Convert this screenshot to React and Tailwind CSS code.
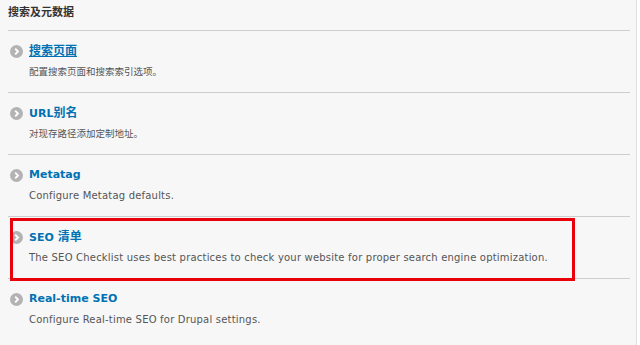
import React from "react";

const items = [
  { title: <span className="text-[12px]">搜索页面</span>, desc: "配置搜索页面和搜索索引选项。", cjk: true, underline: true },
  { title: <>URL<span className="text-[12px]">别名</span></>, desc: "对现存路径添加定制地址。", cjk: true },
  { title: "Metatag", desc: "Configure Metatag defaults." },
  { title: <>SEO <span className="text-[12px]">清单</span></>, desc: "The SEO Checklist uses best practices to check your website for proper search engine optimization." },
  { title: "Real-time SEO", desc: "Configure Real-time SEO for Drupal settings.", last: true },
];

function Icon() {
  return (
    <svg width="13" height="13" viewBox="0 0 13 13" className="shrink-0">
      <circle cx="6.5" cy="6.5" r="6.5" fill="#b3b3b3" />
      <path d="M5.2 3.6 L8 6.5 L5.2 9.4" stroke="#fff" strokeWidth="1.9" fill="none" />
    </svg>
  );
}

export default function App() {
  return (
    <div className="relative w-[640px] h-[345px] bg-white overflow-hidden" style={{ fontFamily: '"DejaVu Sans", "Noto Sans CJK SC", sans-serif' }}>
      <div className="w-[637px] h-[345px] bg-[#f7f7f7] border-r border-[#dedede] pl-[8px]">
        <div className="w-[622px]">
          <div className="h-[31px] border-b border-[#cdcdcd] pt-[5px] text-[11px] leading-[16px] font-bold text-[#333]">
            搜索及元数据
          </div>
          {items.map((it, i) => (
            <div key={i} className={`h-[62px] pt-[12px] ${it.last ? "" : "border-b border-[#cdcdcd]"}`}>
              <div className="flex items-center h-[16px]">
                <div className="w-[21px] pl-[2px] flex items-center pt-[1px]">
                  <Icon />
                </div>
                <a className={`text-[11px] leading-[16px] font-bold text-[#0071b3] ${it.underline ? "underline" : ""}`}>{it.title}</a>
              </div>
              <div className={`mt-[6px] pl-[21px] leading-[14px] text-[#555] ${it.cjk ? "text-[9.5px]" : "text-[10px] tracking-[0.2px]"}`}>
                {it.desc}
              </div>
            </div>
          ))}
        </div>
      </div>
      <div className="absolute left-[10px] top-[218px] w-[565px] h-[63px] border-[3px] border-[#e8000b]" />
    </div>
  );
}
